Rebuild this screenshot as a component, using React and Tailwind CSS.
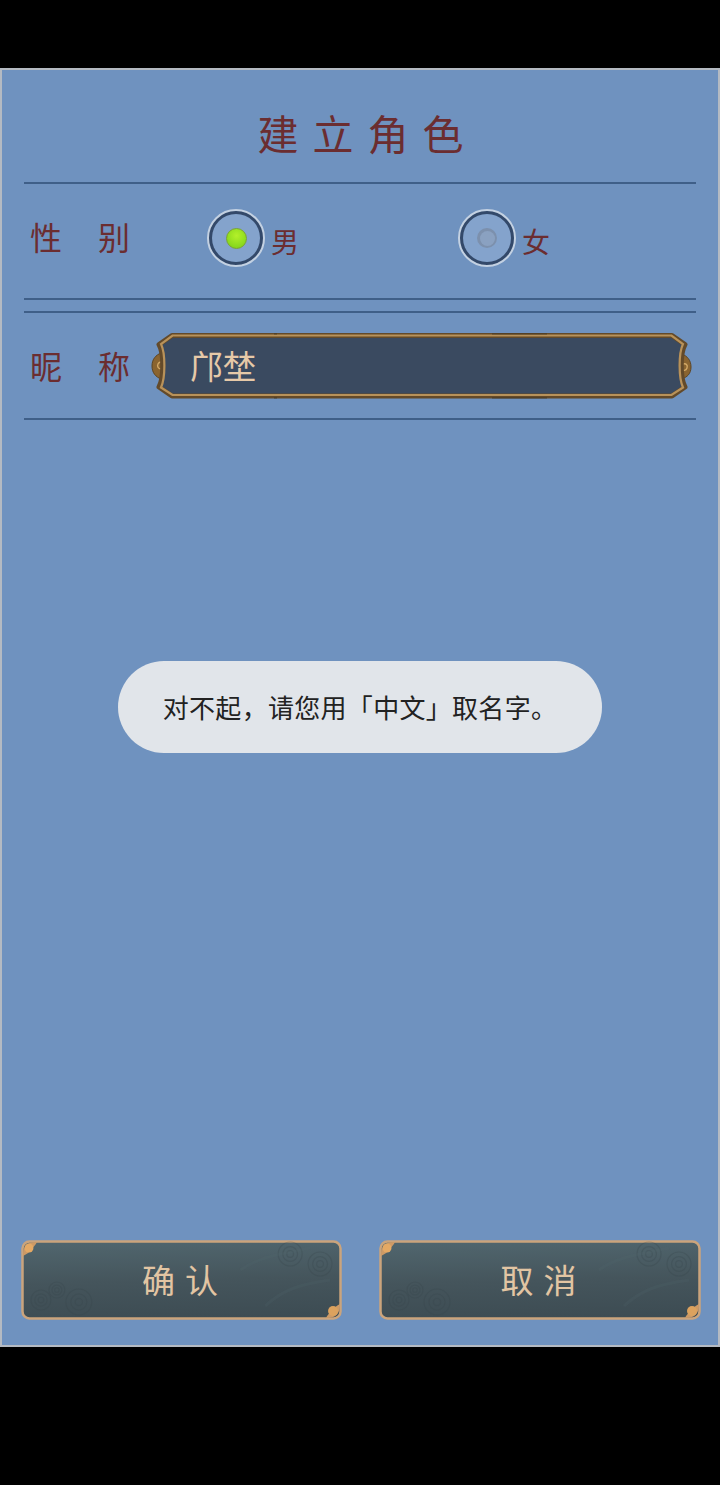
import { useId } from 'react';

const cjk = "font-['Noto_Sans_CJK_SC','Noto_Sans',sans-serif]";

const Divider = () => <div className="mx-[22px] h-[2px] bg-[#3f5f88]" />;

const Radio = ({ label, checked }) => (
  <div className="flex shrink-0 items-center">
    <div className="flex h-[58px] w-[58px] shrink-0 items-center justify-center rounded-full border-2 border-[#c3d1e2] bg-[#33496a] p-[3px]">
      <div className="flex h-full w-full items-center justify-center rounded-full bg-[#84a3cc]">
        {checked ? (
          <div className="h-[21px] w-[21px] rounded-full border border-[#7ba52e] bg-[radial-gradient(circle_at_50%_35%,#b4f02a,#78d016)]" />
        ) : (
          <div className="flex h-[20px] w-[20px] items-center justify-center rounded-full bg-[#7c90ad]">
            <div className="h-[15px] w-[15px] rounded-full bg-[#8aa1c1]" />
          </div>
        )}
      </div>
    </div>
    <span className="ml-[6px] mt-[5px] text-[28px] leading-none text-[#6b2d30]">{label}</span>
  </div>
);

// ornate input frame
const NameFrame = () => (
  <svg className="absolute inset-0 overflow-visible" width="540" height="66" viewBox="0 0 540 66">
    <path d="M0 33c0-7 4-11 9-13l5 3c-2 6-2 14 0 20l-5 3c-5-2-9-6-9-13z" fill="#8a6430" stroke="#5d4524" strokeWidth="1" />
    <path d="M539 34c0-7-4-11-9-13l-5 2c2 6 2 14 0 20l5 3c5-2 9-5 9-12z" fill="#8a6430" stroke="#5d4524" strokeWidth="1" />
    <path d="M9 36c-3 0-4-3-3-5s4-3 6-1" fill="none" stroke="#d2a866" strokeWidth="1.4" />
    <path d="M531 31c3-1 5 1 4 4s-4 3-5 1M532 40c-2 0-3-1-3-2" fill="none" stroke="#d2a866" strokeWidth="1.4" />
    <path
      d="M20 2.5H520L533 11.5C528 20 528 45 533 54L520 63H20L7 54C12 45 12 20 7 11.5Z"
      fill="#3a4a60"
      stroke="#634a2a"
      strokeWidth="5"
      strokeLinejoin="round"
    />
    <path
      d="M20.5 2.5H519.5L531 11C526.5 20 526.5 45 531 54.5L519.5 62H20.5L9 54.5C13.5 45 13.5 20 9 11Z"
      fill="none"
      stroke="#b8925a"
      strokeWidth="2.2"
    />
    <path d="M340 1H395M340 65H395M122 1H125M122 65H125" stroke="#2a2418" strokeWidth="1" opacity="0.5" />
  </svg>
);

const Swirl = ({ cx, cy, r }) => (
  <g fill="none" stroke="#37454b" strokeWidth="1.2" opacity="0.28">
    <circle cx={cx} cy={cy} r={r} />
    <circle cx={cx} cy={cy} r={r * 0.62} />
    <circle cx={cx} cy={cy} r={r * 0.28} />
  </g>
);

const ActionButton = ({ label, className }) => {
  const id = useId();
  return (
    <button className={`relative flex h-[80px] items-center justify-center ${className}`}>
      <svg className="absolute inset-0" width="100%" height="100%" viewBox="0 0 322 80" preserveAspectRatio="none">
        <defs>
          <linearGradient id={id} x1="0.45" y1="0" x2="0.55" y2="1">
            <stop offset="0" stopColor="#50656d" />
            <stop offset="0.5" stopColor="#45555c" />
            <stop offset="1" stopColor="#3d4c53" />
          </linearGradient>
        </defs>
        <rect x="1.5" y="1.5" width="319" height="77" rx="7" fill={`url(#${id})`} stroke="#cba47c" strokeWidth="2.5" />
        <Swirl cx="58" cy="62" r="13" />
        <Swirl cx="20" cy="60" r="10" />
        <Swirl cx="36" cy="50" r="8" />
        <Swirl cx="270" cy="14" r="12" />
        <Swirl cx="300" cy="24" r="12" />
        <path d="M220 30C240 16 262 14 290 8M245 66C262 50 280 44 310 40" fill="none" stroke="#54686f" strokeWidth="3" opacity="0.18" />
        <path d="M2 16C2 6 6 2 16 2C15 5 12 7 10 10C8 13 5 14 2 16Z" fill="#cd9a66" />
        <circle cx="8" cy="8" r="4.5" fill="#e5a964" />
        <path d="M320 64C320 74 316 78 306 78C307 75 310 73 312 70C314 67 317 66 320 64Z" fill="#cd9a66" />
        <circle cx="313" cy="71" r="5" fill="#dca25e" />
      </svg>
      <span className="relative pl-[7px] pb-[2px] text-[33px] leading-none tracking-[10px] text-[#e2c5a3]">{label}</span>
    </button>
  );
};

export default function App() {
  return (
    <div className={`flex h-[1485px] w-[720px] flex-col bg-black pt-[68px] pb-[138px] ${cjk}`}>
      <div className="relative flex flex-1 flex-col border-2 border-[#b4bac2] bg-[#6f92bf]">
        {/* Title */}
        <div className="flex h-[112px] items-center justify-center pt-[12px]">
          <h1 className="pl-[15px] text-[41px] font-normal leading-none tracking-[14px] text-[#6b2d30]">建立角色</h1>
        </div>
        <Divider />

        {/* Gender */}
        <div className="flex h-[114px] items-center px-[22px] pb-[6px]">
          <div className="flex w-[183px] shrink-0 gap-[36px] pl-[6px] pb-[5px] text-[32px] leading-none text-[#6b2d30]">
            <span>性</span>
            <span>别</span>
          </div>
          <div className="flex gap-[159px]">
            <Radio label="男" checked />
            <Radio label="女" />
          </div>
        </div>
        <Divider />
        <div className="mt-[11px]">
          <Divider />
        </div>

        {/* Nickname */}
        <div className="flex h-[105px] items-center px-[22px]">
          <div className="flex w-[128px] shrink-0 gap-[36px] pl-[6px] pb-[2px] text-[32px] leading-none text-[#6b2d30]">
            <span>昵</span>
            <span>称</span>
          </div>
          <div className="relative flex h-[66px] w-[540px] shrink-0 items-center pl-[38px]">
            <NameFrame />
            <span className="relative text-[33px] leading-none text-[#e6c9a8]">邝埜</span>
          </div>
        </div>
        <Divider />

        {/* Buttons */}
        <div className="mt-auto flex gap-[37px] pb-[25px] pl-[19px]">
          <ActionButton label="确认" className="w-[321px]" />
          <ActionButton label="取消" className="w-[322px]" />
        </div>

        {/* Toast */}
        <div className="absolute left-[116px] top-[591px] flex h-[92px] w-[484px] items-center justify-center rounded-[46px] bg-[#e1e5ea] text-[26px] leading-none tracking-[0.3px] text-[#222222]">
          对不起，请您用「中文」取名字。
        </div>
      </div>
    </div>
  );
}
